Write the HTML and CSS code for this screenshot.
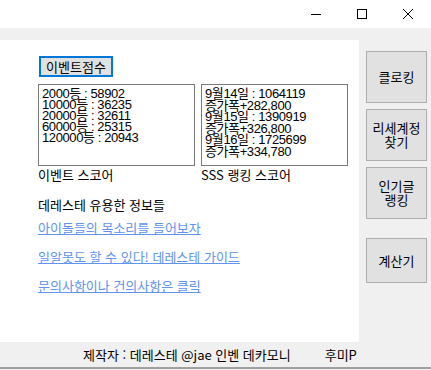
FILE: index.html
```html
<!DOCTYPE html>
<html lang="ko">
<head>
  <meta charset="UTF-8">
  <title>데레스테</title>
  <link rel="stylesheet" href="styles.css">
</head>
<body>
  <div class="titlebar">
    <div class="ctrl">
      <svg width="12" height="12" viewBox="0 0 12 12"><path d="M1 6.5h10" stroke="#000" stroke-width="1"/></svg>
    </div>
    <div class="ctrl">
      <svg width="12" height="12" viewBox="0 0 12 12"><rect x="1.5" y="1.5" width="9" height="9" fill="none" stroke="#000" stroke-width="1"/></svg>
    </div>
    <div class="ctrl">
      <svg width="12" height="12" viewBox="0 0 12 12"><path d="M1 1l10 10M11 1L1 11" stroke="#000" stroke-width="1"/></svg>
    </div>
  </div>

  <div class="window">
    <div class="main">
      <button class="event-btn">이벤트점수</button>

      <div class="boxes">
        <div class="col">
          <div class="box box-event">
            <div class="line">2000등 : 58902</div>
            <div class="line">10000등 : 36235</div>
            <div class="line">20000등 : 32611</div>
            <div class="line">60000등 : 25315</div>
            <div class="line">120000등 : 20943</div>
          </div>
          <div class="caption">이벤트 스코어</div>
        </div>
        <div class="col">
          <div class="box box-sss">
            <div class="line">9월14일 : 1064119</div>
            <div class="line">증가폭+282,800</div>
            <div class="line">9월15일 : 1390919</div>
            <div class="line">증가폭+326,800</div>
            <div class="line">9월16일 : 1725699</div>
            <div class="line">증가폭+334,780</div>
          </div>
          <div class="caption">SSS 랭킹 스코어</div>
        </div>
      </div>

      <div class="info-title">데레스테 유용한 정보들</div>
      <a class="link" href="#">아이돌들의 목소리를 들어보자</a>
      <a class="link" href="#">일알못도 할 수 있다! 데레스테 가이드</a>
      <a class="link" href="#">문의사항이나 건의사항은 클릭</a>
    </div>

    <div class="side">
      <button class="side-btn">클로킹</button>
      <button class="side-btn">리세계정<br>찾기</button>
      <button class="side-btn">인기글<br>랭킹</button>
      <button class="side-btn last">계산기</button>
    </div>
  </div>

  <div class="footer">
    <span class="credit">제작자 : 데레스테 @jae 인벤 데카모니</span>
    <span class="author">후미P</span>
  </div>
</body>
</html>
```

FILE: styles.css
```css
body {
  margin: 0;
  width: 431px;
  height: 370px;
  overflow: hidden;
  background-color: #f0f0f0;
  font-family: "Noto Sans CJK KR", "Noto Sans", sans-serif;
  font-size: 13px;
  color: #000;
}

.titlebar {
  height: 28px;
  background: #fff;
  display: flex;
  justify-content: flex-end;
}

.ctrl {
  width: 46px;
  height: 28px;
  display: flex;
  align-items: center;
  justify-content: center;
}

.window {
  display: flex;
  margin-top: 12px;
  height: 302px;
}

.main {
  width: 321px;
  background: #fff;
  padding: 16px 0 0 38px;
}

.event-btn {
  display: block;
  width: 74px;
  height: 21px;
  padding: 0;
  margin-left: 1px;
  border: 2px solid #0078d7;
  background: #e1e1e1;
  font-family: inherit;
  font-size: 13px;
  line-height: 15px;
}

.boxes {
  display: flex;
  gap: 6px;
  margin-top: 7px;
}

.box {
  height: 82px;
  border: 1px solid #7a7a7a;
  padding: 3px 0 0 3px;
  box-sizing: border-box;
  overflow: hidden;
  font-family: "Liberation Sans", "Noto Sans CJK KR", sans-serif;
  font-size: 13px;
  letter-spacing: -0.4px;
}

.line {
  height: 11px;
  line-height: 11px;
}

.box-event {
  width: 157px;
}

.box-sss {
  width: 147px;
}

.box-sss .line {
  height: 11.5px;
  line-height: 11.5px;
}

.caption {
  margin-top: 2px;
  line-height: 14px;
}

.info-title {
  margin-top: 15px;
  line-height: 16px;
}

.link {
  display: block;
  color: #6094ee;
  line-height: 16px;
  margin-top: 7px;
  width: max-content;
}

.link + .link {
  margin-top: 13px;
}

.side {
  flex: 1;
  display: flex;
  flex-direction: column;
  padding: 11px 0 0 7px;
}

.side-btn {
  width: 61px;
  height: 52px;
  margin-bottom: 6px;
  padding: 0;
  border: 1px solid #adadad;
  background: #e1e1e1;
  font-family: inherit;
  font-size: 13px;
  line-height: 14px;
}

.side-btn.last {
  margin-top: 13px;
  height: 45px;
}

.footer {
  height: 27px;
  border-bottom: 2px solid #a0a0a0;
  box-sizing: border-box;
  display: flex;
  align-items: center;
  padding-left: 83px;
}

.author {
  margin-left: 34px;
}
```
